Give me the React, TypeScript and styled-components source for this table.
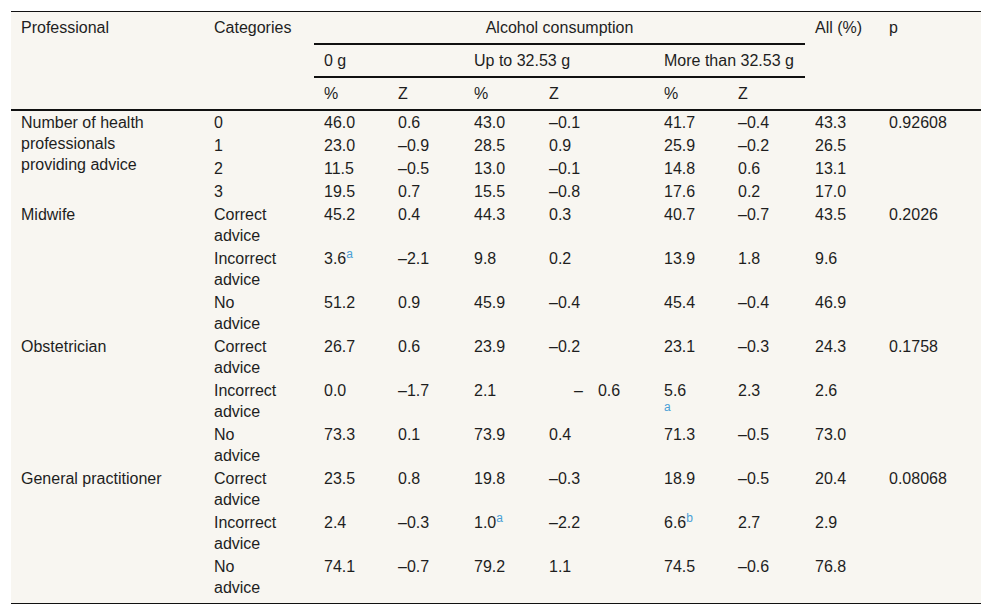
import React, { ReactElement, ReactNode } from 'react';
import styled, { createGlobalStyle } from 'styled-components';

type Row = {
	category: string;
	values: ReactNode[];
	all: string;
	p?: string;
};

type Group = {
	professional: string;
	rows: Row[];
};

const GlobalStyle = createGlobalStyle`
	body {
		margin: 0;
		background-color: white;
		font-family: 'Liberation Sans', Arial, sans-serif;
	}
`;

const TableWrapperDiv = styled.div`
	width: 970px;
	margin: 11px 0 0 11px;
	padding-bottom: 4px;
	background-color: #f8f6f1;
	border-top: 1px solid #111;
	border-bottom: 1px solid #111;
`;

const Table = styled.table`
	width: 970px;
	table-layout: fixed;
	border-collapse: separate;
	border-spacing: 0;
	font-size: 16px;
	line-height: 21px;
	color: #1e1e1e;
`;

const HeadCell = styled.th<{ $ruled?: boolean; $center?: boolean }>`
	padding: 5px 10px;
	font-weight: 400;
	text-align: ${(props) => (props.$center ? 'center' : 'left')};
	vertical-align: top;
	white-space: nowrap;
	border-bottom: ${(props) => (props.$ruled ? '2px solid #111' : 'none')};
`;

const Cell = styled.td`
	padding: 1px 10px;
	vertical-align: top;
	text-align: left;
`;

const ProfessionalCell = styled(Cell)`
	padding-right: 30px;
`;

const CategoryCell = styled(Cell)`
	padding-right: 34px;
`;

const Sup = styled.sup`
	font-size: 12px;
	line-height: 0;
	color: #4a9fd6;
`;

const Dash = styled.span`
	display: inline-block;
	margin-left: 25px;
	margin-right: 15px;
`;

const Note = ({ mark }: { mark: string }) => <Sup>{mark}</Sup>;

const groups: Group[] = [
	{
		professional: 'Number of health professionals providing advice',
		rows: [
			{ category: '0', values: ['46.0', '0.6', '43.0', '–0.1', '41.7', '–0.4'], all: '43.3', p: '0.92608' },
			{ category: '1', values: ['23.0', '–0.9', '28.5', '0.9', '25.9', '–0.2'], all: '26.5' },
			{ category: '2', values: ['11.5', '–0.5', '13.0', '–0.1', '14.8', '0.6'], all: '13.1' },
			{ category: '3', values: ['19.5', '0.7', '15.5', '–0.8', '17.6', '0.2'], all: '17.0' },
		],
	},
	{
		professional: 'Midwife',
		rows: [
			{ category: 'Correct advice', values: ['45.2', '0.4', '44.3', '0.3', '40.7', '–0.7'], all: '43.5', p: '0.2026' },
			{
				category: 'Incorrect advice',
				values: [<>3.6<Note mark="a" /></>, '–2.1', '9.8', '0.2', '13.9', '1.8'],
				all: '9.6',
			},
			{ category: 'No advice', values: ['51.2', '0.9', '45.9', '–0.4', '45.4', '–0.4'], all: '46.9' },
		],
	},
	{
		professional: 'Obstetrician',
		rows: [
			{ category: 'Correct advice', values: ['26.7', '0.6', '23.9', '–0.2', '23.1', '–0.3'], all: '24.3', p: '0.1758' },
			{
				category: 'Incorrect advice',
				values: [
					'0.0',
					'–1.7',
					'2.1',
					<>
						<Dash>–</Dash>0.6
					</>,
					<>
						5.6
						<br />
						<Note mark="a" />
					</>,
					'2.3',
				],
				all: '2.6',
			},
			{ category: 'No advice', values: ['73.3', '0.1', '73.9', '0.4', '71.3', '–0.5'], all: '73.0' },
		],
	},
	{
		professional: 'General practitioner',
		rows: [
			{ category: 'Correct advice', values: ['23.5', '0.8', '19.8', '–0.3', '18.9', '–0.5'], all: '20.4', p: '0.08068' },
			{
				category: 'Incorrect advice',
				values: ['2.4', '–0.3', <>1.0<Note mark="a" /></>, '–2.2', <>6.6<Note mark="b" /></>, '2.7'],
				all: '2.9',
			},
			{ category: 'No advice', values: ['74.1', '–0.7', '79.2', '1.1', '74.5', '–0.6'], all: '76.8' },
		],
	},
];

const colWidths = [193, 110, 74, 76, 75, 115, 74, 77, 74, 102];

function App(): ReactElement {
	return (
		<>
			<GlobalStyle />
			<TableWrapperDiv>
				<Table>
					<colgroup>
						{colWidths.map((w, i) => (
							<col key={i} style={{ width: `${w}px` }} />
						))}
					</colgroup>
					<thead>
						<tr>
							<HeadCell rowSpan={3} $ruled>
								Professional
							</HeadCell>
							<HeadCell rowSpan={3} $ruled>
								Categories
							</HeadCell>
							<HeadCell colSpan={6} $ruled $center>
								Alcohol consumption
							</HeadCell>
							<HeadCell rowSpan={3} $ruled>
								All (%)
							</HeadCell>
							<HeadCell rowSpan={3} $ruled>
								p
							</HeadCell>
						</tr>
						<tr>
							<HeadCell colSpan={2} $ruled>
								0 g
							</HeadCell>
							<HeadCell colSpan={2} $ruled>
								Up to 32.53 g
							</HeadCell>
							<HeadCell colSpan={2} $ruled>
								More than 32.53 g
							</HeadCell>
						</tr>
						<tr>
							{['%', 'Z', '%', 'Z', '%', 'Z'].map((label, i) => (
								<HeadCell key={i} $ruled>
									{label}
								</HeadCell>
							))}
						</tr>
					</thead>
					<tbody>
						{groups.map((group) =>
							group.rows.map((row, index) => (
								<tr key={`${group.professional}${index}`}>
									{index === 0 && (
										<ProfessionalCell rowSpan={group.rows.length}>{group.professional}</ProfessionalCell>
									)}
									<CategoryCell>{row.category}</CategoryCell>
									{row.values.map((value, i) => (
										<Cell key={i}>{value}</Cell>
									))}
									<Cell>{row.all}</Cell>
									<Cell>{row.p || ''}</Cell>
								</tr>
							)),
						)}
					</tbody>
				</Table>
			</TableWrapperDiv>
		</>
	);
}

export default App;
